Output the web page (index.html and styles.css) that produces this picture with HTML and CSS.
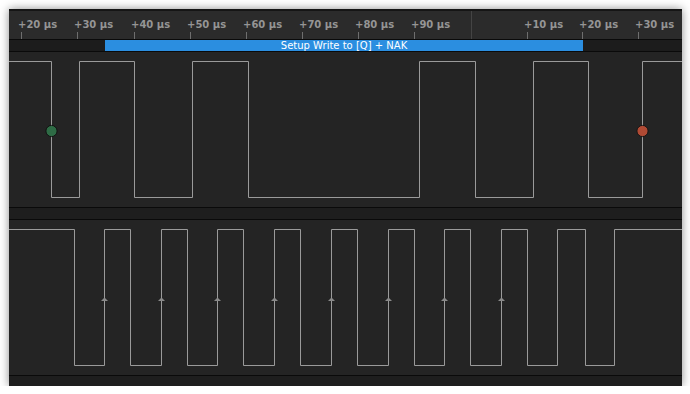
FILE: index.html
```html
<!DOCTYPE html>
<html lang="en">
<head>
    <meta charset="UTF-8">
    <title>Logic Analyzer - Capture</title>
    <link rel="stylesheet" href="styles.css">
</head>
<body>
    <div class="viewer">
        <!-- Time ruler -->
        <div class="ruler">
            <svg width="673" height="28" viewBox="0 0 673 28">
                <line class="marker" x1="462.5" y1="0" x2="462.5" y2="28"/>
                <g class="ticks">
                    <line x1="12.5" y1="21" x2="12.5" y2="28"/>
                    <line x1="68.5" y1="21" x2="68.5" y2="28"/>
                    <line x1="125.5" y1="21" x2="125.5" y2="28"/>
                    <line x1="181.5" y1="21" x2="181.5" y2="28"/>
                    <line x1="237.5" y1="21" x2="237.5" y2="28"/>
                    <line x1="293.5" y1="21" x2="293.5" y2="28"/>
                    <line x1="349.5" y1="21" x2="349.5" y2="28"/>
                    <line x1="405.5" y1="21" x2="405.5" y2="28"/>
                    <line x1="518.5" y1="21" x2="518.5" y2="28"/>
                    <line x1="573.5" y1="21" x2="573.5" y2="28"/>
                    <line x1="629.5" y1="21" x2="629.5" y2="28"/>
                </g>
                <g class="labels">
                    <text x="9" y="17">+20 µs</text>
                    <text x="65" y="17">+30 µs</text>
                    <text x="122" y="17">+40 µs</text>
                    <text x="178" y="17">+50 µs</text>
                    <text x="234" y="17">+60 µs</text>
                    <text x="290" y="17">+70 µs</text>
                    <text x="346" y="17">+80 µs</text>
                    <text x="402" y="17">+90 µs</text>
                    <text x="515" y="17">+10 µs</text>
                    <text x="570" y="17">+20 µs</text>
                    <text x="626" y="17">+30 µs</text>
                </g>
            </svg>
        </div>

        <!-- Decoded protocol -->
        <div class="annotations">
            <div class="frame">Setup Write to [Q] + NAK</div>
        </div>

        <!-- Channel 0 -->
        <div class="channel">
            <svg width="673" height="155" viewBox="0 0 673 155">
                <polyline class="wave" points="0,9.5 42.5,9.5 42.5,145.5 70.5,145.5 70.5,9.5 125.5,9.5 125.5,145.5 183.5,145.5 183.5,9.5 239.5,9.5 239.5,145.5 410.5,145.5 410.5,9.5 466.5,9.5 466.5,145.5 524.5,145.5 524.5,9.5 579.5,9.5 579.5,145.5 633.5,145.5 633.5,9.5 673,9.5"/>
                <circle class="start" cx="42.5" cy="79" r="5.6"/>
                <circle class="stop" cx="633.5" cy="79" r="5.6"/>
            </svg>
        </div>

        <div class="divider"></div>

        <!-- Channel 1 (clock) -->
        <div class="channel">
            <svg width="673" height="155" viewBox="0 0 673 155">
                <polyline class="wave" points="0,9.5 65.5,9.5 65.5,145.5 95.5,145.5 95.5,9.5 121.5,9.5 121.5,145.5 152.5,145.5 152.5,9.5 178.5,9.5 178.5,145.5 208.5,145.5 208.5,9.5 234.5,9.5 234.5,145.5 265.5,145.5 265.5,9.5 291.5,9.5 291.5,145.5 322.5,145.5 322.5,9.5 348.5,9.5 348.5,145.5 379.5,145.5 379.5,9.5 405.5,9.5 405.5,145.5 435.5,145.5 435.5,9.5 461.5,9.5 461.5,145.5 492.5,145.5 492.5,9.5 518.5,9.5 518.5,145.5 548.5,145.5 548.5,9.5 576.5,9.5 576.5,145.5 605.5,145.5 605.5,9.5 673,9.5"/>
                <g class="edges">
                    <polygon points="92,81 95.5,77.5 99,81"/>
                    <polygon points="149,81 152.5,77.5 156,81"/>
                    <polygon points="205,81 208.5,77.5 212,81"/>
                    <polygon points="262,81 265.5,77.5 269,81"/>
                    <polygon points="319,81 322.5,77.5 326,81"/>
                    <polygon points="376,81 379.5,77.5 383,81"/>
                    <polygon points="432,81 435.5,77.5 439,81"/>
                    <polygon points="489,81 492.5,77.5 496,81"/>
                </g>
            </svg>
        </div>

        <div class="footer"></div>
    </div>
</body>
</html>
```

FILE: styles.css
```css
/* General */
body { margin: 0; background-color: #ffffff; font-family: "DejaVu Sans", Verdana, sans-serif; }
.viewer {
    margin: 9px 0 0 9px;
    width: 673px;
    display: flex;
    flex-direction: column;
    background-color: #242424;
    box-shadow: 0 0 9px rgba(0, 0, 0, 0.45);
}
svg { display: block; }

/* Ruler */
.ruler { height: 28px; background-color: #2b2b2b; border-top: 2px solid #151515; border-bottom: 1px solid #0a0a0a; }
.ruler .marker { stroke: #444444; stroke-width: 1; }
.ruler .ticks line { stroke: #6e6e6e; stroke-width: 1; }
.ruler .labels text { fill: #959595; font-size: 10px; font-weight: bold; font-family: "DejaVu Sans", Verdana, sans-serif; }

/* Protocol bar */
.annotations { height: 11px; background-color: #1c1c1c; border-bottom: 1px solid #0a0a0a; display: flex; }
.annotations .frame {
    margin-left: 96px;
    width: 478px;
    background-color: #2b8ee0;
    color: #ffffff;
    font-size: 10px;
    line-height: 11px;
    text-align: center;
    white-space: nowrap;
}

/* Channels */
.channel { height: 155px; background-color: #242424; }
.wave { fill: none; stroke: #9a9a9a; stroke-width: 1; }
.start { fill: #2e6b45; stroke: #111111; stroke-width: 1; }
.stop { fill: #b04a34; stroke: #151515; stroke-width: 1; }
.edges polygon { fill: #8a8a8a; }

.divider { height: 11px; background-color: #1e1e1e; border-top: 1px solid #0a0a0a; border-bottom: 1px solid #0a0a0a; }
.footer { height: 10px; background-color: #1e1e1e; border-top: 1px solid #0a0a0a; }
```
